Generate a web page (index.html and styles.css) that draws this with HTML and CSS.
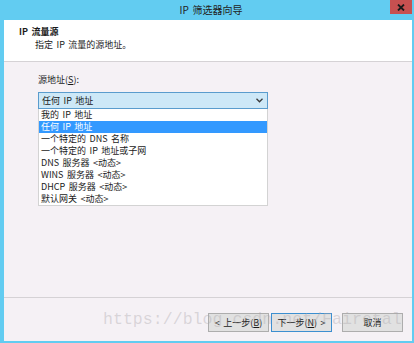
FILE: index.html
```html
<!DOCTYPE html>
<html lang="zh-CN">
<head>
  <meta charset="UTF-8" />
  <title>IP 筛选器向导</title>
  <link rel="stylesheet" href="styles.css">
</head>
<body>

  <div class="window">
    <!-- Title bar -->
    <div class="titlebar">
      <span class="title">IP 筛选器向导</span>
      <div class="close">
        <svg width="8" height="7" viewBox="0 0 8 7">
          <path d="M1 0.5 L7 6.5 M7 0.5 L1 6.5" stroke="#1a1a1a" stroke-width="1.8" />
        </svg>
      </div>
    </div>

    <div class="client">
      <!-- Wizard header -->
      <div class="wiz-header">
        <div class="wiz-title">IP 流量源</div>
        <div class="wiz-sub">指定 IP 流量的源地址。</div>
      </div>

      <!-- Page body -->
      <div class="wiz-body">
        <div class="field-label">源地址(<u>S</u>):</div>
        <div class="combo">
          <span>任何 IP 地址</span>
          <svg width="7" height="5" viewBox="0 0 7 5">
            <polyline points="0.5,0.8 3.5,3.8 6.5,0.8" fill="none" stroke="#3a3a3a" stroke-width="1.3" />
          </svg>
        </div>
        <ul class="dropdown">
          <li>我的 IP 地址</li>
          <li class="selected">任何 IP 地址</li>
          <li>一个特定的 DNS 名称</li>
          <li>一个特定的 IP 地址或子网</li>
          <li>DNS 服务器 &lt;动态&gt;</li>
          <li>WINS 服务器 &lt;动态&gt;</li>
          <li>DHCP 服务器 &lt;动态&gt;</li>
          <li>默认网关 &lt;动态&gt;</li>
        </ul>
      </div>

      <!-- Buttons -->
      <div class="wiz-footer">
        <button class="btn">&lt; 上一步(<u>B</u>)</button>
        <button class="btn default">下一步(<u>N</u>) &gt;</button>
        <button class="btn cancel">取消</button>
      </div>
    </div>

    <div class="watermark">https://blog.csdn.net/Fairetal</div>
  </div>

</body>
</html>
```

FILE: styles.css
```css
body {
  margin: 0;
  padding: 0;
  font-family: "Noto Sans CJK SC", "Noto Sans", sans-serif;
  font-size: 9px;
  word-spacing: 1.5px;
  color: #1a1a1a;
}

.window {
  position: relative;
  width: 414px;
  height: 343px;
  box-sizing: border-box;
  background: #62ccf1;
  padding: 0 2px 2px 4px;
  display: flex;
  flex-direction: column;
  overflow: hidden;
}

.titlebar {
  height: 20px;
  display: flex;
  align-items: center;
  justify-content: center;
  position: relative;
}

.title {
  font-size: 10px;
  color: #222;
  margin-left: 6px;
  margin-top: -2px;
}

.close {
  position: absolute;
  top: 0;
  right: 0;
  width: 22px;
  height: 14px;
  background: #c75050;
  display: flex;
  align-items: center;
  justify-content: center;
}

.client {
  flex: 1;
  background: #f5f1f5;
  display: flex;
  flex-direction: column;
}

.wiz-header {
  height: 42px;
  box-sizing: border-box;
  background: #fff;
  border-bottom: 1px solid #d5d2d5;
  padding: 6px 0 0 15px;
}

.wiz-title {
  font-weight: bold;
  line-height: 12px;
}

.wiz-sub {
  line-height: 12px;
  margin-top: 1px;
  padding-left: 16px;
}

.wiz-body {
  flex: 1;
  padding: 12px 0 0 34px;
  border-bottom: 1px solid #d5d2d5;
}

.field-label {
  line-height: 12px;
  margin-bottom: 6px;
}

.combo {
  width: 230px;
  height: 17px;
  box-sizing: border-box;
  background: #cde8f7;
  border: 1px solid #5a9ccd;
  display: flex;
  align-items: center;
  justify-content: space-between;
  padding: 0 4px 0 3px;
}

.dropdown {
  list-style: none;
  margin: 0;
  padding: 0;
  width: 230px;
  box-sizing: border-box;
  background: #fff;
  border: 1px solid #d3d3d3;
  border-top: none;
}

.dropdown li {
  height: 12px;
  line-height: 12px;
  padding-left: 2px;
  white-space: nowrap;
}

.dropdown li.selected {
  background: #3399ff;
  color: #fff;
}

.wiz-footer {
  height: 43px;
  box-sizing: border-box;
  display: flex;
  justify-content: flex-end;
  padding: 15px 9px 0 0;
  gap: 2px;
}

.btn {
  width: 61px;
  height: 19px;
  box-sizing: border-box;
  background: #e1e1e1;
  border: 1px solid #adadad;
  font-family: inherit;
  font-size: 9px;
  word-spacing: 1.5px;
  color: #1a1a1a;
  padding: 0;
}

.btn.default {
  border-color: #3c8fd0;
}

.btn.cancel {
  margin-left: 8px;
}

.watermark {
  position: absolute;
  left: 103px;
  top: 310px;
  font-family: "Liberation Mono", monospace;
  font-size: 16.6px;
  word-spacing: 0;
  color: rgba(170, 165, 170, 0.38);
  pointer-events: none;
  white-space: nowrap;
}
```
